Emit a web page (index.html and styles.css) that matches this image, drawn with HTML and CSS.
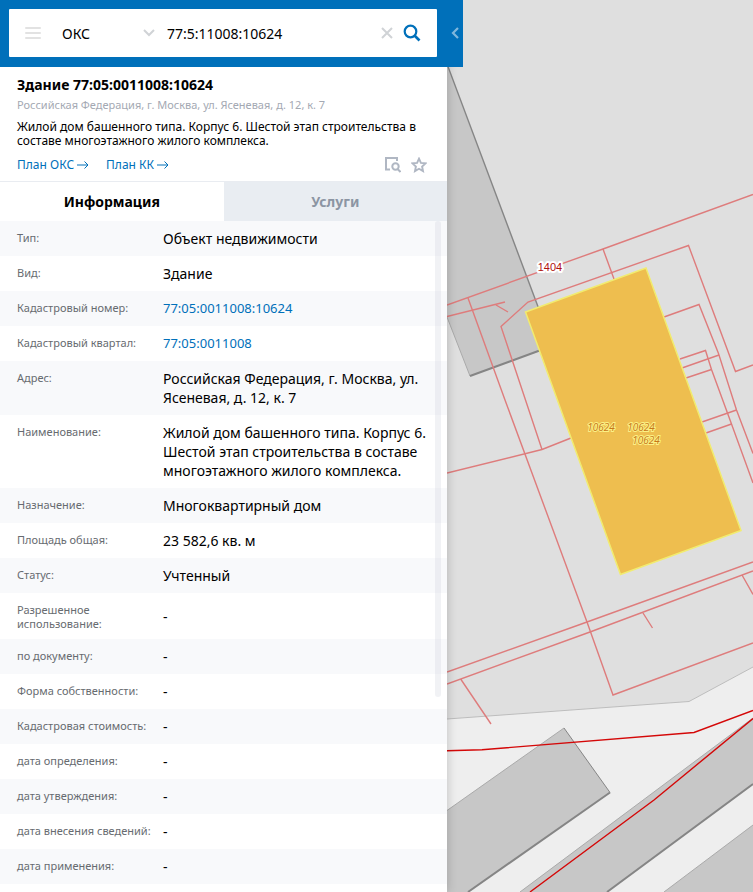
FILE: index.html
```html
<!DOCTYPE html>
<html lang="ru">
<head>
<meta charset="utf-8">
<meta name="viewport" content="width=device-width, initial-scale=1">
<title>Здание 77:05:0011008:10624</title>
<link rel="stylesheet" href="styles.css">
</head>
<body>
<div class="app">
  <aside class="panel">
    <header class="topbar">
      <form class="search">
        <button class="icon-btn menu-btn" type="button" aria-label="Меню">
          <svg width="16" height="12" viewBox="0 0 16 12"><path d="M1 1h14M1 6h14M1 11h14" stroke="#e2e2e2" stroke-width="2" stroke-linecap="round"/></svg>
        </button>
        <span class="select-wrap">
          <select class="kind" aria-label="Тип объекта"><option>ОКС</option></select>
          <svg class="chevron" width="12" height="8" viewBox="0 0 12 8"><path d="M1 1l5 5 5-5" fill="none" stroke="#d0d3d6" stroke-width="2"/></svg>
        </span>
        <input class="query" type="text" aria-label="Поиск" value="77:5:11008:10624">
        <button class="icon-btn" type="button" aria-label="Очистить">
          <svg width="12" height="12" viewBox="0 0 12 12"><path d="M1 1l10 10M11 1L1 11" stroke="#d0d3d6" stroke-width="2"/></svg>
        </button>
        <button class="icon-btn" type="submit" aria-label="Найти">
          <svg width="18" height="18" viewBox="0 0 18 18"><circle cx="7.500" cy="7.500" r="5.800" fill="none" stroke="#0070ba" stroke-width="2.200"/><path d="M11.500 11.500l5 5" stroke="#0070ba" stroke-width="2.600"/></svg>
        </button>
      </form>
      <button class="icon-btn collapse" type="button" aria-label="Свернуть">
        <svg width="8" height="12" viewBox="0 0 8 12"><path d="M7 1L2 6l5 5" fill="none" stroke="#80b7dc" stroke-width="2.200"/></svg>
      </button>
    </header>

    <section class="summary">
      <h1 class="title">Здание 77:05:0011008:10624</h1>
      <p class="address">Российская Федерация, г. Москва, ул. Ясеневая, д. 12, к. 7</p>
      <p class="about">Жилой дом башенного типа. Корпус 6. Шестой этап строительства в составе многоэтажного жилого комплекса.</p>
      <div class="actions">
        <a class="plan" href="#">План ОКС<svg width="12" height="8" viewBox="0 0 12 8"><path d="M0 4h11M7.500.500L11 4 7.500 7.500" fill="none" stroke="#0070ba"/></svg></a>
        <a class="plan" href="#">План КК<svg width="12" height="8" viewBox="0 0 12 8"><path d="M0 4h11M7.500.500L11 4 7.500 7.500" fill="none" stroke="#0070ba"/></svg></a>
        <span class="tools">
          <button class="icon-btn" type="button" aria-label="Показать на карте">
            <svg width="16" height="16" viewBox="0 0 16 16" fill="none" stroke="#b0b7c3" stroke-width="2"><path d="M5 12.500H1V1h11v3"/><circle cx="10.500" cy="9.500" r="3.200"/><path d="M12.500 12l3 3"/></svg>
          </button>
          <button class="icon-btn" type="button" aria-label="В избранное">
            <svg width="16" height="16" viewBox="0 0 16 16"><path d="M8 1.700l1.900 4.200 4.600.500-3.400 3.100.900 4.600L8 11.800l-4 2.300.900-4.600L1.500 6.400l4.600-.500z" fill="none" stroke="#b0b7c3" stroke-width="1.900"/></svg>
          </button>
        </span>
      </div>
    </section>

    <nav class="tabs">
      <button class="tab tab-active" type="button">Информация</button>
      <button class="tab" type="button">Услуги</button>
    </nav>

    <div class="details">
      <table class="props">
        <tbody>
          <tr><th scope="row">Тип:</th><td>Объект недвижимости</td></tr>
          <tr><th scope="row">Вид:</th><td>Здание</td></tr>
          <tr><th scope="row">Кадастровый номер:</th><td><a href="#">77:05:0011008:10624</a></td></tr>
          <tr><th scope="row">Кадастровый квартал:</th><td><a href="#">77:05:0011008</a></td></tr>
          <tr><th scope="row">Адрес:</th><td>Российская Федерация, г. Москва, ул. Ясеневая, д. 12, к. 7</td></tr>
          <tr><th scope="row">Наименование:</th><td>Жилой дом башенного типа. Корпус 6. Шестой этап строительства в составе многоэтажного жилого комплекса.</td></tr>
          <tr><th scope="row">Назначение:</th><td>Многоквартирный дом</td></tr>
          <tr><th scope="row">Площадь общая:</th><td>23 582,6 кв. м</td></tr>
          <tr><th scope="row">Статус:</th><td>Учтенный</td></tr>
          <tr><th scope="row">Разрешенное использование:</th><td>-</td></tr>
          <tr><th scope="row">по документу:</th><td>-</td></tr>
          <tr><th scope="row">Форма собственности:</th><td>-</td></tr>
          <tr><th scope="row">Кадастровая стоимость:</th><td>-</td></tr>
          <tr><th scope="row">дата определения:</th><td>-</td></tr>
          <tr><th scope="row">дата утверждения:</th><td>-</td></tr>
          <tr><th scope="row">дата внесения сведений:</th><td>-</td></tr>
          <tr><th scope="row">дата применения:</th><td>-</td></tr>
        </tbody>
      </table>
      <span class="scrollbar"></span>
    </div>
  </aside>

  <main class="map">
    <svg class="map-canvas" viewBox="447 0 306 892" preserveAspectRatio="xMinYMin slice" role="img" aria-label="Карта">
      <rect x="447" width="306" height="892" fill="#dfdfdf"/>
      <path d="M447 719L689 701.500 753 667V892H447z" fill="#eee"/>
      <path d="M447 719L689 701.500 753 667" fill="none" stroke="#bdbdbd"/>
      <g fill="#c7c7c7">
        <path d="M447 66L553 346 470 376 447 317z"/>
        <path d="M447 810.500L564 728 610 792.500 468 892H447z"/>
        <path d="M520 892L753 718V784L607 892z"/>
        <path d="M664 892L753 825V892z"/>
      </g>
      <g fill="none" stroke="#aaa">
        <path d="M447 317L470 376M447 810.500L564 728M520 892L753 718M664 892L753 825"/>
      </g>
      <g fill="none" stroke="#858585">
        <path d="M447 64L540 312" stroke-width="1.400"/>
        <path d="M564 728L610 792.500"/>
        <path d="M470 376L541 350M610 792.500L468 892M753 784L607 892" stroke-width="2"/>
      </g>
      <g fill="none" stroke="#de7c7c" stroke-width="1.400">
        <path d="M447 305L603 249 753 194.500M603 249L614 279M447 316.500L505 302M496 305L508 312"/>
        <path d="M468 298L505 400 587 622 613 695 753 643"/>
        <path d="M542 449.500L501 326.500 528 302 688.500 245.500 735.500 371.500 753 365"/>
        <path d="M447 473L542 449.500 571 438"/>
        <path d="M664 317L699 304.500 718.500 353.500 736.500 410 753 453.500"/>
        <path d="M680 359L705.500 350.500 711.500 369.500 731.500 424 753 483"/>
        <path d="M682 368L719 355M686 378L711.500 369.500M702 422L736.500 410M706 433L731.500 424"/>
        <path d="M447 672L587 622 753 562M447 684L590 632 753 571M643 613L652.500 628M742 575L753 594.500M461 679.500L491 724"/>
      </g>
      <g fill="none" stroke="#d40808" stroke-width="1.400">
        <path d="M447 750.700L482 749.700 694 732.500 753 710.500M530 892L654 800 753 718.500"/>
      </g>
      <path d="M525.500 312L646 268 741 530.500 620.500 574.500z" fill="#eebe4f" stroke="#f1ec70" stroke-width="1.500"/>
      <text class="parcel" x="550" y="271" text-anchor="middle">1404</text>
      <g class="building" text-anchor="middle">
        <text x="601" y="431">10624</text>
        <text x="641" y="431">10624</text>
        <text x="646" y="444">10624</text>
      </g>
    </svg>
  </main>
</div>
</body>
</html>
```
FILE: styles.css
```css
* {
  box-sizing: border-box;
}

body {
  margin: 0;
  font-family: "Noto Sans", "Open Sans", sans-serif;
  font-size: 14px;
  line-height: 19px;
  color: #000;
}

a {
  color: #0070ba;
  text-decoration: none;
}

.app {
  display: flex;
  height: 100vh;
  overflow: hidden;
}

.panel {
  position: relative;
  z-index: 1;
  display: flex;
  flex-direction: column;
  flex: none;
  width: min(447px, 60vw);
  background: #fff;
  box-shadow: 0 0 10px rgba(0, 0, 0, 0.2);
}

.icon-btn {
  display: flex;
  align-items: center;
  justify-content: center;
  padding: 0;
  border: 0;
  background: none;
  cursor: pointer;
}

.topbar {
  display: flex;
  align-items: center;
  gap: 14px;
  flex: none;
  margin-right: -16px;
  padding: 9px 4px 10px 9px;
  background: #0070ba;
}

.search {
  display: flex;
  align-items: center;
  flex: 1;
  min-width: 0;
  height: 48px;
  gap: 10px;
  padding: 0 16px;
  background: #fff;
  border-radius: 1px;
}

.menu-btn {
  margin-right: 11px;
}

.select-wrap {
  display: flex;
  align-items: center;
  width: 95px;
}

.kind {
  flex: 1;
  min-width: 0;
  padding: 0;
  border: 0;
  appearance: none;
  background: none;
  font: inherit;
  color: inherit;
}

.chevron {
  margin-right: 2px;
}

.query {
  flex: 1;
  min-width: 0;
  padding: 0;
  border: 0;
  outline: 0;
  font: inherit;
  color: inherit;
}

.summary {
  flex: none;
  padding: 8px 20px 7px 17px;
  border-bottom: 1px solid #e9ecf1;
}

.title {
  margin: 0;
  font-size: 14px;
  line-height: 19px;
}

.address {
  margin: 4px 0 8px;
  font-size: 11px;
  line-height: 14px;
  color: #a4a9b3;
}

.about {
  margin: 0;
  font-size: 12px;
  line-height: 14px;
}

.actions {
  display: flex;
  align-items: center;
  gap: 17px;
  margin-top: 7px;
  font-size: 12px;
}

.plan {
  display: flex;
  align-items: center;
  gap: 3px;
}

.tools {
  display: flex;
  gap: 10px;
  margin-left: auto;
}

.tabs {
  display: flex;
  flex: none;
}

.tab {
  flex: 1;
  height: 39px;
  padding: 0;
  border: 0;
  background: #e9edf2;
  font: inherit;
  font-weight: bold;
  color: #8c95a3;
}

.tab-active {
  background: #fff;
  color: #000;
}

.details {
  position: relative;
  flex: 1;
  min-height: 0;
  overflow: hidden;
}

.props {
  width: 100%;
  border-collapse: collapse;
  table-layout: fixed;
}

.props tr:nth-child(odd) {
  background: #f8f9fb;
}

.props th {
  width: 163px;
  padding: 10px 8px 8px 17px;
  font-size: 11px;
  font-weight: normal;
  line-height: 14px;
  text-align: left;
  vertical-align: top;
  color: #676b70;
}

.props td {
  padding: 8px 12px 8px 0;
  vertical-align: middle;
}

.props a {
  display: block;
  font-size: 13px;
}

.scrollbar {
  position: absolute;
  top: 0;
  right: 6px;
  width: 6px;
  height: 71%;
  border-radius: 3px;
  background: rgba(200, 205, 215, 0.25);
}

.map {
  flex: 1;
  min-width: 0;
}

.map-canvas {
  display: block;
  width: 100%;
  height: 100%;
}

.parcel {
  font: 11px "Liberation Sans", sans-serif;
  fill: #b01010;
  stroke: #fff;
  stroke-width: 4px;
  stroke-linejoin: round;
  paint-order: stroke;
}

.building {
  font: italic 10px "Open Sans", "Noto Sans", sans-serif;
  fill: #c87818;
  stroke: #fbf186;
  stroke-width: 2px;
  paint-order: stroke;
}
```
